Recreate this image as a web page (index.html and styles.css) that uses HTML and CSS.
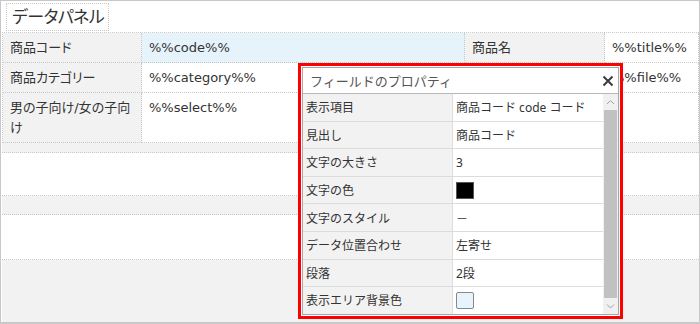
FILE: index.html
```html
<!DOCTYPE html>
<html lang="ja">
<head>
  <meta charset="UTF-8" />
  <title>データパネル</title>
  <link rel="stylesheet" href="styles.css">
</head>
<body>
  <div class="screen">
    <div class="panel-head">
      <span class="panel-title">データパネル</span>
    </div>

    <div class="grid">
      <div class="cell label">商品コード</div>
      <div class="cell value active">%%code%%</div>
      <div class="cell label">商品名</div>
      <div class="cell value">%%title%%</div>

      <div class="cell label">商品カテゴリー</div>
      <div class="cell value">%%category%%</div>
      <div class="cell label">ファイル</div>
      <div class="cell value">%%file%%</div>

      <div class="cell label tall">男の子向け/女の子向け</div>
      <div class="cell value tall">%%select%%</div>
      <div class="cell value tall"></div>
      <div class="cell value tall"></div>
    </div>

    <div class="band band-gray b1"></div>
    <div class="band band-white b2"></div>
    <div class="band band-gray b3"></div>
    <div class="band band-white b4"></div>
    <div class="band band-gray b5"></div>

    <!-- フィールドのプロパティ -->
    <div class="highlight">
      <div class="dialog">
        <div class="dialog-head">
          <span>フィールドのプロパティ</span>
          <svg class="close" width="12" height="12" viewBox="0 0 12 12">
            <path d="M1.5 1.5 L10.5 10.5 M10.5 1.5 L1.5 10.5" stroke="#3c3c3c" stroke-width="2" fill="none"/>
          </svg>
        </div>
        <div class="dialog-body">
          <div class="props">
            <div class="prop"><div class="pk">表示項目</div><div class="pv">商品コード code コード</div></div>
            <div class="prop"><div class="pk">見出し</div><div class="pv">商品コード</div></div>
            <div class="prop"><div class="pk">文字の大きさ</div><div class="pv">3</div></div>
            <div class="prop"><div class="pk">文字の色</div><div class="pv"><span class="swatch black"></span></div></div>
            <div class="prop"><div class="pk">文字のスタイル</div><div class="pv">－</div></div>
            <div class="prop"><div class="pk">データ位置合わせ</div><div class="pv">左寄せ</div></div>
            <div class="prop"><div class="pk">段落</div><div class="pv">2段</div></div>
            <div class="prop"><div class="pk">表示エリア背景色</div><div class="pv"><span class="swatch light"></span></div></div>
          </div>
          <div class="scrollbar">
            <svg class="arrow" width="15" height="12" viewBox="0 0 15 12">
              <path d="M4 8 L7.5 4.5 L11 8" stroke="#a0a0a0" stroke-width="1" fill="none"/>
            </svg>
            <div class="thumb"></div>
            <svg class="arrow" width="15" height="12" viewBox="0 0 15 12">
              <path d="M4 4.5 L7.5 8 L11 4.5" stroke="#a0a0a0" stroke-width="1" fill="none"/>
            </svg>
          </div>
        </div>
      </div>
    </div>
  </div>
</body>
</html>
```

FILE: styles.css
```css
* {
  margin: 0;
  padding: 0;
  box-sizing: border-box;
}

body {
  font-family: "Noto Sans", "Noto Sans CJK JP", sans-serif;
  color: #333;
  background: #fff;
}

.screen {
  position: relative;
  width: 700px;
  height: 324px;
  border: 1px solid #c8c8c8;
  border-bottom-width: 2px;
  padding-left: 1px;
  overflow: hidden;
}

.panel-head {
  height: 31px;
  padding: 2px 0 0 4px;
}

.panel-title {
  display: inline-block;
  height: 28px;
  padding: 0 4px 0 5px;
  border: 1px dotted #c8c8c8;
  font-size: 17px;
  line-height: 25px;
  letter-spacing: -0.6px;
  font-feature-settings: "palt";
  color: #333;
}

.grid {
  display: grid;
  grid-template-columns: 139px 323px 140px 1fr;
  border-top: 1px dotted #c8c8c8;
  border-left: 1px dotted #c8c8c8;
  font-family: "DejaVu Sans", "Noto Sans CJK JP", sans-serif;
  font-feature-settings: "palt";
}

.cell {
  height: 30px;
  padding: 5px 7px;
  font-size: 13px;
  line-height: 20px;
  border-bottom: 1px dotted #c8c8c8;
  border-right: 1px dotted #c8c8c8;
}

.cell.tall {
  height: 50px;
}

.label {
  background: #f2f2f2;
}

.value {
  background: #fff;
  padding-left: 7px;
}

.value.active {
  background: #e6f3fb;
}

.band {
  border-bottom: 1px dotted #c8c8c8;
}

.band-gray {
  background: #f2f2f2;
}

.band-white {
  background: #fff;
}

.b1 { height: 10px; }
.b2 { height: 43px; }
.b3 { height: 19px; }
.b4 { height: 45px; }
.b5 { height: 70px; border-bottom: none; }

/* dialog */
.highlight {
  position: absolute;
  left: 297px;
  top: 62px;
  width: 325px;
  height: 256px;
  border: 3px solid #f00;
  padding: 1px;
  background: #fff;
}

.dialog {
  height: 100%;
  border: 1px solid #a8a8a8;
  display: flex;
  flex-direction: column;
  background: #fff;
}

.dialog-head {
  height: 26px;
  flex: none;
  display: flex;
  align-items: center;
  justify-content: space-between;
  padding: 0 4px 0 7px;
  border-bottom: 1px solid #b8b8b8;
  font-size: 13px;
  color: #555;
}

.close {
  display: block;
}

.dialog-body {
  flex: 1;
  display: flex;
  overflow: hidden;
}

.props {
  flex: 1;
}

.prop {
  display: flex;
  height: 27.6px;
  border-bottom: 1px solid #dcdcdc;
  font-size: 12px;
  color: #333;
}

.pk {
  width: 150px;
  background: #f2f2f2;
  border-right: 1px solid #dcdcdc;
  padding-left: 3px;
  display: flex;
  align-items: center;
}

.pv {
  flex: 1;
  padding-left: 3px;
  display: flex;
  align-items: center;
}

.swatch {
  display: inline-block;
  width: 18px;
  height: 17px;
}

.swatch.black {
  background: #000;
  border: 1px solid #555;
}

.swatch.light {
  background: #e8f4fc;
  border: 1px solid #888;
  border-radius: 2px;
}

.scrollbar {
  width: 15px;
  flex: none;
  background: #f0f0f0;
  display: flex;
  flex-direction: column;
}

.arrow {
  display: block;
  flex: none;
  margin: 2px 0;
}

.thumb {
  flex: 1;
  background: #c1c1c1;
  margin: 0 1px;
}
```
